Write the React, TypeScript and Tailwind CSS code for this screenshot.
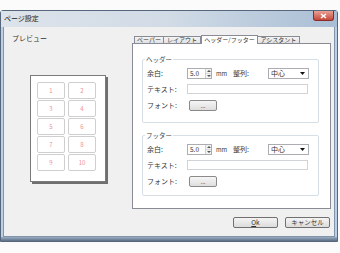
import React from "react";

function Spin({ value }: { value: string }) {
  return (
    <div className="w-[25px] h-[11px] border border-[#abadb3] bg-white flex items-stretch">
      <span className="flex-1 text-[6.5px] leading-[9px] pl-[2px]">{value}</span>
      <div className="w-[6px] flex flex-col border-l border-[#d0d0d0]">
        <div className="flex-1 flex items-center justify-center bg-[#f3f3f3] border-b border-[#d8d8d8]">
          <svg width="4" height="2" viewBox="0 0 4 2"><path d="M0 2L2 0L4 2Z" fill="#555" /></svg>
        </div>
        <div className="flex-1 flex items-center justify-center bg-[#f3f3f3]">
          <svg width="4" height="2" viewBox="0 0 4 2"><path d="M0 0L2 2L4 0Z" fill="#555" /></svg>
        </div>
      </div>
    </div>
  );
}

function Select() {
  return (
    <div className="w-[41px] h-[11px] border border-[#abadb3] bg-white flex items-center justify-between pl-[2px] pr-[3px]">
      <span className="text-[7px] leading-none">中心</span>
      <svg width="5" height="3" viewBox="0 0 5 3"><path d="M0 0L2.5 3L5 0Z" fill="#111" /></svg>
    </div>
  );
}

function Group({ title, h }: { title: string; h: string }) {
  return (
    <div className={`relative ml-[9px] w-[177px] ${h} border border-[#d5dfe5] rounded-[2px] pt-[8px] pl-[4px]`}>
      <span className="absolute -top-[5px] left-[2px] bg-white px-[1px] text-[6.5px] leading-[9px] text-[#444]">{title}</span>
      <div className="flex items-center h-[11px]">
        <span className="w-[40px] text-[7px] leading-none">余白:</span>
        <Spin value="5.0" />
        <span className="ml-[4px] w-[17px] text-[6px] leading-none">mm</span>
        <span className="w-[35px] text-[7px] leading-none">整列:</span>
        <Select />
      </div>
      <div className="flex items-center h-[10px] mt-[5px]">
        <span className="w-[40px] text-[7px] leading-none">テキスト:</span>
        <div className="w-[121px] h-[10px] border border-[#d0d3d8] bg-white" />
      </div>
      <div className="flex items-center h-[11px] mt-[6px]">
        <span className="w-[42px] text-[7px] leading-none">フォント:</span>
        <div className="w-[28px] h-[11px] border border-[#8a8a8a] rounded-[2px] bg-gradient-to-b from-[#f6f6f6] to-[#dedede] flex items-center justify-center text-[6px] leading-none">
          ...
        </div>
      </div>
    </div>
  );
}

export default function App() {
  const nums = [1, 2, 3, 4, 5, 6, 7, 8, 9, 10];
  return (
    <div className="w-[340px] h-[253px] bg-[#fbfbfb] font-['Noto_Sans_CJK_JP',sans-serif] text-[#333] overflow-hidden">
      <div className="mt-[10px] w-[338px] h-[232px] border border-[#56677d] rounded-t-[3px] bg-[#bcd0e5] flex flex-col">
        <div className="h-[16px] flex items-start justify-between bg-gradient-to-r from-[#dde3ea] via-[#d1dbe6] to-[#a9bed5]">
          <span className="text-[7px] leading-none mt-[4px] ml-[3px] text-[#222]">ページ設定</span>
          <div className="w-[21px] h-[10px] mr-[3px] bg-gradient-to-b from-[#e8a093] to-[#c4473c] border border-[#8a2b24] border-t-0 rounded-b-[3px] flex items-center justify-center">
            <svg width="7" height="6" viewBox="0 0 7 6"><path d="M1 1L6 5M6 1L1 5" stroke="white" strokeWidth="1.5" /></svg>
          </div>
        </div>
        <div className="mx-[2px] h-[210px] bg-[#f0f0f0] border-x border-b border-[#8194aa] flex">
          <div className="w-[128px] pl-[8px] pt-[7px] flex flex-col">
            <span className="text-[7px] leading-[9px]">プレビュー</span>
            <div className="mt-[32px] ml-[18px] w-[76px] h-[107px] border border-[#7a7a7a] bg-white shadow-[2px_2px_0_#6f6f6f] pt-[6px] pl-[6px]">
              <div className="grid grid-cols-[28px_28px] gap-x-[3px] gap-y-[1px]">
                {nums.map((n) => (
                  <div key={n} className="h-[17px] border border-[#cfcfcf] rounded-[2px] flex items-center justify-center text-[6px] leading-none text-[#ef8f96]">
                    {n}
                  </div>
                ))}
              </div>
            </div>
          </div>
          <div className="w-[199px] pt-[8px] flex flex-col">
            <div className="h-[8px] flex items-end pl-[2px]">
              <div className="w-[30px] h-[7px] border border-b-0 border-[#898c95] bg-gradient-to-b from-[#f4f4f4] to-[#e2e2e2] flex items-center justify-center text-[6px] leading-none">ペーパー</div>
              <div className="w-[37px] h-[7px] border border-l-0 border-b-0 border-[#898c95] bg-gradient-to-b from-[#f4f4f4] to-[#e2e2e2] flex items-center justify-center text-[6px] leading-none">レイアウト</div>
              <div className="relative z-10 translate-y-[1px] w-[57px] h-[9px] border border-b-0 border-[#898c95] bg-white flex items-center justify-center text-[6px] leading-none">ヘッダー/フッター</div>
              <div className="w-[42px] h-[7px] border border-l-0 border-b-0 border-[#898c95] bg-gradient-to-b from-[#f4f4f4] to-[#e2e2e2] flex items-center justify-center text-[6px] leading-none">アシスタント</div>
            </div>
            <div className="h-[166px] border border-[#898c95] bg-white pt-[15px]">
              <Group title="ヘッダー" h="h-[64px]" />
              <div className="mt-[12px]">
                <Group title="フッター" h="h-[61px]" />
              </div>
            </div>
            <div className="mt-[8px] flex justify-end gap-[7px] pr-[1px]">
              <div className="w-[45px] h-[11px] border border-[#707070] rounded-[2px] bg-gradient-to-b from-[#f4f4f4] to-[#dcdcdc] flex items-center justify-center text-[6.5px] leading-none">
                <span><u>O</u>k</span>
              </div>
              <div className="w-[45px] h-[11px] border border-[#707070] rounded-[2px] bg-gradient-to-b from-[#f4f4f4] to-[#dcdcdc] flex items-center justify-center text-[6.5px] leading-none">
                キャンセル
              </div>
            </div>
          </div>
        </div>
        <div className="flex-1 bg-gradient-to-b from-[#9aaec4] to-[#5d6f85]" />
      </div>
    </div>
  );
}
